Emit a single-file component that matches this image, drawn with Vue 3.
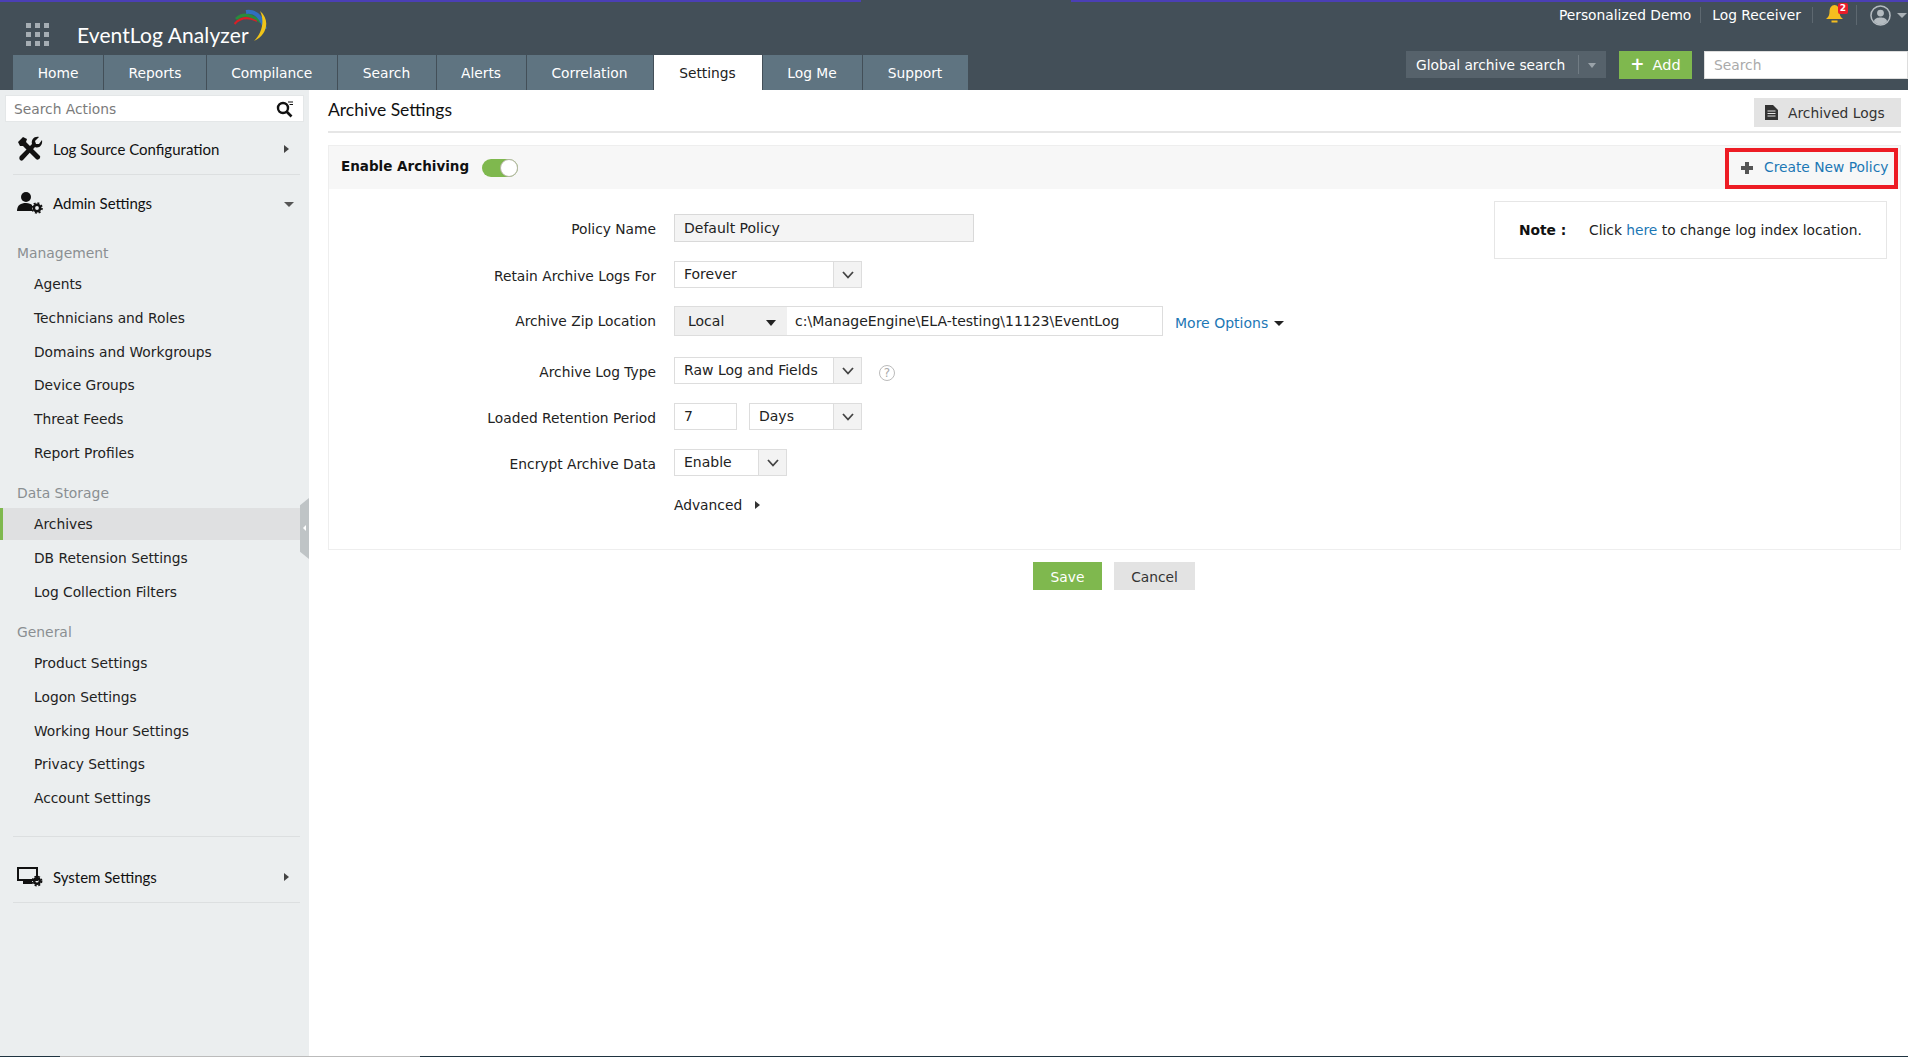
<script setup>
const tabs = [
  { label: 'Home', w: 91 },
  { label: 'Reports', w: 103 },
  { label: 'Compilance', w: 130.5 },
  { label: 'Search', w: 99 },
  { label: 'Alerts', w: 90 },
  { label: 'Correlation', w: 127 },
  { label: 'Settings', w: 109, active: true },
  { label: 'Log Me', w: 100 },
  { label: 'Support', w: 106 }
]
const groups = [
  { title: 'Management', cls: 'g1', items: ['Agents', 'Technicians and Roles', 'Domains and Workgroups', 'Device Groups', 'Threat Feeds', 'Report Profiles'] },
  { title: 'Data Storage', cls: 'g2', items: ['Archives', 'DB Retension Settings', 'Log Collection Filters'] },
  { title: 'General', cls: 'g3', items: ['Product Settings', 'Logon Settings', 'Working Hour Settings', 'Privacy Settings', 'Account Settings'] }
]
</script>

<template>
  <div class="page">
    <header class="head">
      <div class="strip"></div>
      <div class="top">
        <div class="brand">
          <div class="grid9"><i v-for="n in 9" :key="n"></i></div>
          <span class="logo">EventLog Analyzer</span>
          <svg class="swoosh" width="34" height="34" viewBox="0 0 34 34" fill="none">
            <path d="M0.5 15Q9 5 23 12" stroke="#d81f26" stroke-width="2"/>
            <path d="M2 10Q12 1 27 13" stroke="#2a8a3c" stroke-width="3"/>
            <path d="M12 3Q26 1 31 20" stroke="#2f6fc0" stroke-width="4"/>
            <path d="M26 2C36 10 34 26 20 32C28 24 31 12 26 2Z" fill="#f0c419"/>
          </svg>
        </div>
        <div class="links">
          <span class="lnk l1">Personalized Demo</span>
          <span class="lnk l2">Log Receiver</span>
          <span class="bell">
            <svg width="19" height="18" viewBox="0 0 19 18"><path d="M9.5 0C12.500 0 14.500 3 14.500 7C14.500 10 15.500 12 18 14H1C3.500 12 4.500 10 4.500 7C4.500 3 6.500 0 9.500 0Z" fill="#f5bd1f"/><rect x="6.500" y="15.500" width="6" height="2" fill="#f5bd1f"/></svg>
            <b class="badge">2</b>
          </span>
          <svg class="user" width="21" height="21" viewBox="0 0 22 22"><circle cx="11" cy="11" r="10" fill="none" stroke="#b4bbc0" stroke-width="1.6"/><circle cx="11" cy="8.500" r="3.600" fill="#b4bbc0"/><path d="M4 17C5 13.500 8 13 11 13C14 13 17 13.500 18 17C16 19.500 13.500 20.500 11 20.500C8.500 20.500 6 19.500 4 17Z" fill="#b4bbc0"/></svg>
          <span class="caret-gray"></span>
        </div>
      </div>
      <div class="navrow">
        <nav class="tabs">
          <a v-for="t in tabs" :key="t.label" class="tab" :class="{ on: t.active }" :style="{ width: t.w + 'px' }">{{ t.label }}</a>
        </nav>
        <div class="tools">
          <div class="global"><span>Global archive search</span><em></em></div>
          <button class="add"><b>+</b>Add</button>
          <div class="hsearch">Search</div>
        </div>
      </div>
    </header>

    <div class="body">
      <aside class="side">
        <div class="actions"><span>Search Actions</span>
          <svg width="18" height="18" viewBox="0 0 18 18" fill="none"><circle cx="7" cy="8" r="5" stroke="#111" stroke-width="2.400"/><path d="M10.500 11.500L15.500 16.500" stroke="#111" stroke-width="2.600"/><path d="M12 2H17M13.500 4.500H17" stroke="#111" stroke-width="1.200"/></svg>
        </div>
        <div class="sec s1">
          <svg width="26" height="26" viewBox="0 0 26 26"><path d="M1 6L6 1L10 3L9 6L23 20C24 22 21 25 19 23L6 10L3 10Z" fill="#111"/><path d="M3 20L15 8C14 4 17 0 22 1L18 5L19 8L22 8L25 4C26 9 22 13 18 11L6 24C4 26 1 23 3 20Z" fill="#111"/></svg>
          <span>Log Source Configuration</span><em class="right"></em>
        </div>
        <div class="sec s2">
          <svg width="26" height="24" viewBox="0 0 26 24"><circle cx="9" cy="6" r="5" fill="#111"/><path d="M0 20C0 14 4 12 9 12C12 12 14 13 15 14V20Z" fill="#111"/><circle cx="20" cy="17" r="3.200" fill="none" stroke="#111" stroke-width="2.600"/><circle cx="20" cy="17" r="5" fill="none" stroke="#111" stroke-width="1.600" stroke-dasharray="2 1.900"/></svg>
          <span>Admin Settings</span><em class="down"></em>
        </div>
        <section v-for="g in groups" :key="g.title" class="group" :class="g.cls">
          <h4>{{ g.title }}</h4>
          <a v-for="i in g.items" :key="i" class="item" :class="{ cur: i === 'Archives' }">{{ i }}</a>
        </section>
        <div class="sep"></div>
        <div class="sec s3">
          <svg width="26" height="22" viewBox="0 0 26 22" fill="none"><path d="M1 2H20V14H1Z" stroke="#111" stroke-width="2"/><rect x="6" y="15" width="9" height="3" fill="#111"/><circle cx="20" cy="15" r="2.800" stroke="#111" stroke-width="2.400"/><circle cx="20" cy="15" r="4.600" stroke="#111" stroke-width="1.600" stroke-dasharray="2 1.700"/></svg>
          <span>System Settings</span><em class="right"></em>
        </div>
        <div class="handle"><i></i></div>
      </aside>

      <main class="main">
        <div class="titlebar">
          <h1>Archive Settings</h1>
          <div class="archived">
            <svg width="13" height="15" viewBox="0 0 13 15"><path d="M0 0H8L13 5V15H0Z" fill="#333"/><path d="M2.500 6H10.500M2.500 8.500H10.500M2.500 11H10.500" stroke="#e5e5e5"/></svg>
            Archived Logs
          </div>
        </div>
        <div class="panel">
          <div class="panelhead">
            <b class="en">Enable Archiving</b>
            <span class="toggle"><i></i></span>
            <a class="create"><svg width="12" height="12" viewBox="0 0 12 12"><path d="M4 0H8V4H12V8H8V12H4V8H0V4H4Z" fill="#555"/></svg><span>Create New Policy</span></a>
          </div>
          <div class="panelbody">
            <div class="form">
              <div class="row r1"><label>Policy Name</label><div class="inp dis w1">Default Policy</div></div>
              <div class="row r2"><label>Retain Archive Logs For</label><div class="sel w2"><span>Forever</span><em><svg width="12" height="8" viewBox="0 0 12 8" fill="none"><path d="M1 1L6 6.500L11 1" stroke="#444" stroke-width="1.800"/></svg></em></div></div>
              <div class="row r3"><label>Archive Zip Location</label>
                <div class="zip"><div class="local">Local<i></i></div><div class="path">c:\ManageEngine\ELA-testing\11123\EventLog</div></div>
                <a class="more">More Options</a><i class="morecaret"></i>
              </div>
              <div class="row r4"><label>Archive Log Type</label><div class="sel w2"><span>Raw Log and Fields</span><em><svg width="12" height="8" viewBox="0 0 12 8" fill="none"><path d="M1 1L6 6.500L11 1" stroke="#444" stroke-width="1.800"/></svg></em></div><span class="help">?</span></div>
              <div class="row r5"><label>Loaded Retention Period</label><div class="inp w3">7</div><div class="sel w4"><span>Days</span><em><svg width="12" height="8" viewBox="0 0 12 8" fill="none"><path d="M1 1L6 6.500L11 1" stroke="#444" stroke-width="1.800"/></svg></em></div></div>
              <div class="row r6"><label>Encrypt Archive Data</label><div class="sel w5"><span>Enable</span><em><svg width="12" height="8" viewBox="0 0 12 8" fill="none"><path d="M1 1L6 6.500L11 1" stroke="#444" stroke-width="1.800"/></svg></em></div></div>
              <div class="row r7"><label></label><span class="adv">Advanced</span><em class="right dark"></em></div>
            </div>
            <div class="note"><b>Note :</b><span>Click <a>here</a> to change log index location.</span></div>
          </div>
        </div>
        <div class="btns"><button class="save">Save</button><button class="cancel">Cancel</button></div>
      </main>
    </div>
    <div class="bottom"></div>
  </div>
</template>

<style>
html, body { margin: 0; background: #fff; overflow: hidden; }
</style>

<style scoped>
.page { width: 1908px; height: 1057px; position: relative; overflow: hidden; font-family: "DejaVu Sans", Verdana, sans-serif; font-size: 13.8px; color: #222; display: flex; flex-direction: column; white-space: nowrap; }
a { text-decoration: none; }
h1, h4 { margin: 0; font-weight: normal; }
button { font-family: inherit; border: 0; padding: 0; }
em { font-style: normal; }

.head { height: 90px; flex: none; background: #434f58; display: flex; flex-direction: column; }
.strip { height: 2px; flex: none; background: linear-gradient(to right, #4b3fb5 861px, #434f58 861px, #434f58 1071px, #4b3fb5 1071px); }
.top { height: 53px; flex: none; display: flex; justify-content: space-between; align-items: flex-start; }
.brand { display: flex; align-items: flex-start; padding: 21px 0 0 26px; position: relative; }
.grid9 { width: 23px; height: 23px; display: grid; grid-template-columns: repeat(3, 5px); grid-auto-rows: 5px; gap: 4px; }
.grid9 i { background: #a5adb3; }
.logo { font-family: Lato, sans-serif; font-size: 21px; color: #fff; margin-left: 28px; line-height: 24px; letter-spacing: 0.1px; }
.swoosh { position: absolute; left: 234px; top: 7px; }
.links { display: flex; align-items: center; height: 26px; color: #fff; }
.lnk { height: 16px; line-height: 16px; border-right: 1px solid #5d6870; }
.l1 { padding-right: 9px; }
.l2 { padding: 0 11px 0 11px; }
.bell { position: relative; width: 44px; height: 20px; display: flex; padding-left: 12px; box-sizing: border-box; border-right: 1px solid #5d6870; }
.badge { position: absolute; left: 25px; top: -2px; width: 10px; height: 11px; background: #e81c2a; color: #fff; font-size: 9px; line-height: 11px; text-align: center; border-radius: 2px; }
.user { margin-left: 13px; }
.caret-gray { width: 0; height: 0; border: 5px solid transparent; border-top: 5px solid #aab1b6; border-bottom: 0; margin-left: 6px; margin-right: 1px; }

.navrow { flex: 1; display: flex; justify-content: space-between; padding-left: 13px; }
.tabs { display: flex; align-items: flex-end; }
.tab { height: 35px; box-sizing: border-box; background: #5f7481; border-right: 1px solid #434f58; color: #fff; line-height: 36px; text-align: center; }
.tab.on { background: #fff; color: #222; }
.tools { display: flex; align-items: flex-start; margin-top: -4px; }
.global { width: 200px; height: 27px; box-sizing: border-box; background: #56626b; color: #fff; display: flex; align-items: center; padding-left: 10px; position: relative; }
.global em { position: absolute; right: 10px; top: 12px; border: 4px solid transparent; border-top: 5px solid #9aa3a9; border-bottom: 0; }
.global::after { content: ""; position: absolute; right: 27px; top: 4px; height: 19px; width: 1px; background: #717c84; }
.add { margin-left: 13px; width: 73px; height: 28px; background: #7fb84e; color: #fff; font-size: 14.500px; }
.add b { font-weight: bold; margin-right: 8px; font-size: 17px; line-height: 14px; }
.hsearch { margin-left: 12px; width: 204px; height: 28px; box-sizing: border-box; background: #fff; border: 1px solid #ddd; color: #aaa; padding: 0 0 0 9px; line-height: 26px; }

.body { flex: 1; display: flex; min-height: 0; }
.side { width: 309px; flex: none; background: #ebeeef; position: relative; box-sizing: border-box; padding-top: 5px; }
.actions { margin: 0 5px; height: 27px; box-sizing: border-box; background: #fff; border: 1px solid #e4e7e8; display: flex; justify-content: space-between; align-items: center; padding: 0 9px 0 8px; color: #7b7b7b; }
.sec { margin: 0 9px 0 13px; display: flex; align-items: center; font-family: Lato, sans-serif; font-size: 15px; color: #111; position: relative; box-sizing: border-box; }
.sec svg { flex: none; position: absolute; left: 4px; }
.sec span { margin-left: 40px; }
.s1 { height: 53px; padding-top: 2px; border-bottom: 1px solid #dcdfe0; }
.s2 { height: 56px; }
.s3 { height: 66px; padding-top: 15px; border-bottom: 1px solid #dcdfe0; }
.sep { height: 1px; margin: 0 9px 0 13px; background: #dcdfe0; }
.right, .down { display: block; width: 0; height: 0; border: 4px solid transparent; position: absolute; }
.right { right: 11px; border-left: 5px solid #444; border-right: 0; }
.down { right: 6px; top: 27px; border: 5px solid transparent; border-top: 5px solid #555; border-bottom: 0; }
.group h4 { font-size: 13.900px; color: #8a8f92; margin-left: 17px; height: 17px; line-height: 17px; }
.item { display: block; height: 33.800px; line-height: 33px; padding-left: 34px; box-sizing: border-box; color: #222; }
.item.cur { background: #dfe0e1; border-left: 3px solid #7fb84e; padding-left: 31px; height: 32px; line-height: 32px; margin-bottom: 2px; }
.g1 { margin-top: 14px; padding-bottom: 6.700px; }
.g1 h4 { margin-bottom: 6px; }
.g2 { padding-top: 8px; padding-bottom: 6.400px; }
.g2 h4 { margin-bottom: 5.500px; }
.g3 { padding-top: 8px; padding-bottom: 20.500px; }
.g3 h4 { margin-bottom: 6px; }
.handle { position: absolute; right: 0; top: 408px; width: 9px; height: 61px; background: #bfc4c6; clip-path: polygon(100% 0, 100% 100%, 0 88%, 0 12%); }
.handle i { position: absolute; left: 3px; top: 27px; border: 3px solid transparent; border-right: 3px solid #fff; border-left: 0; }

.main { flex: 1; box-sizing: border-box; padding: 0 7px 0 19px; min-width: 0; }
.titlebar { height: 41px; display: flex; justify-content: space-between; border-bottom: 2px solid #e6e6e6; }
h1 { font-family: Lato, sans-serif; font-size: 17.500px; color: #111; line-height: 40px; height: 40px; }
.archived { width: 147px; height: 29px; margin-top: 8px; background: #e3e3e3; display: flex; align-items: center; gap: 10px; color: #333; box-sizing: border-box; padding-left: 11px; }
.panel { margin-top: 12px; border: 1px solid #eee; box-sizing: border-box; height: 405px; }
.panelhead { height: 43px; background: #f7f7f7; display: flex; align-items: center; padding-left: 12px; position: relative; }
.en { font-weight: bold; color: #111; font-size: 13.500px; padding-bottom: 4px; }
.toggle { margin-left: 13px; width: 36px; height: 18px; border-radius: 9px; background: #7fb84e; position: relative; display: block; }
.toggle i { position: absolute; right: 0; top: 0; width: 16px; height: 16px; border-radius: 50%; background: #fff; border: 1px solid #b5b5a5; }
.create { position: absolute; right: 2px; top: 2px; width: 173px; height: 41px; box-sizing: border-box; border: 4px solid #ed1c24; color: #1c77b5; display: flex; align-items: center; gap: 11px; padding-left: 12px; }
.create span { margin-bottom: 4px; }
.create svg { margin-bottom: 2px; }
.panelbody { display: flex; justify-content: space-between; padding: 12px 13px 0 0; position: relative; }
.form { width: 1000px; font-size: 14px; }
.row { display: flex; position: relative; }
.row label { width: 327px; flex: none; text-align: right; margin-right: 18px; color: #222; font-size: 13.800px; }
.r1 { margin-top: 13px; height: 28px; }
.r1 label { line-height: 30px; }
.r2 { margin-top: 19px; height: 27px; }
.r2 label { line-height: 30px; }
.r3 { margin-top: 18px; height: 30px; }
.r3 label { line-height: 31px; }
.r4 { margin-top: 21px; height: 27px; align-items: flex-start; }
.r4 label { line-height: 30px; }
.r5 { margin-top: 19px; height: 27px; }
.r5 label { line-height: 30px; }
.r6 { margin-top: 19px; height: 27px; }
.r6 label { line-height: 30px; }
.r7 { margin-top: 19px; height: 20px; align-items: center; }
.inp { height: 100%; box-sizing: border-box; border: 1px solid #ddd; padding-left: 9px; line-height: 25px; }
.inp.dis { background: #f4f4f4; border: 1px solid #d9d9d9; line-height: 27px; }
.w1 { width: 300px; }
.w3 { width: 63px; margin-right: 12px; }
.sel { height: 100%; box-sizing: border-box; border: 1px solid #ddd; display: flex; justify-content: space-between; line-height: 25px; padding-left: 9px; }
.sel em { flex: none; width: 28px; background: #f3f3f3; border-left: 1px solid #ddd; display: flex; align-items: center; justify-content: center; padding-left: 1px; box-sizing: border-box; }
.w2 { width: 188px; }
.w4 { width: 113px; }
.w5 { width: 113px; }
.zip { width: 489px; flex: none; height: 100%; display: flex; box-sizing: border-box; border: 1px solid #ddd; }
.local { width: 112px; flex: none; box-sizing: border-box; padding-left: 13px; background: #f0f0f0; line-height: 29px; position: relative; }
.local i { position: absolute; right: 11px; top: 13px; border: 5px solid transparent; border-top: 6px solid #222; border-bottom: 0; }
.path { padding-left: 8px; line-height: 29px; }
.more { color: #1c77b5; margin-left: 12px; line-height: 34px; }
.morecaret { margin: 15px 0 0 6px; width: 0; height: 0; border: 5px solid transparent; border-top: 5px solid #222; border-bottom: 0; }
.help { margin: 8px 0 0 17px; width: 14px; height: 14px; border: 1px solid #bbb; border-radius: 50%; color: #aaa; font-size: 12px; line-height: 14px; text-align: center; }
.adv { color: #222; font-size: 13.800px; }
.dark { position: static; margin-left: 13px; border-left-color: #333; }
.note { width: 393px; height: 58px; box-sizing: border-box; border: 1px solid #e6e6e6; display: flex; align-items: center; padding-left: 24px; }
.note b { width: 70px; color: #111; flex: none; }
.note a { color: #1c77b5; }
.btns { display: flex; gap: 12px; padding-left: 705px; margin-top: 12px; }
.btns button { height: 28px; font-size: 13.800px; padding-top: 1px; }
.save { width: 69px; background: #7fb84e; color: #fff; }
.cancel { width: 81px; background: #e3e3e3; color: #333; }
.bottom { position: absolute; left: 0; right: 0; bottom: 0; height: 1px; background: linear-gradient(to right, #1f3340 60px, #bbb 60px, #bbb 420px, #1f3340 420px); }
</style>
